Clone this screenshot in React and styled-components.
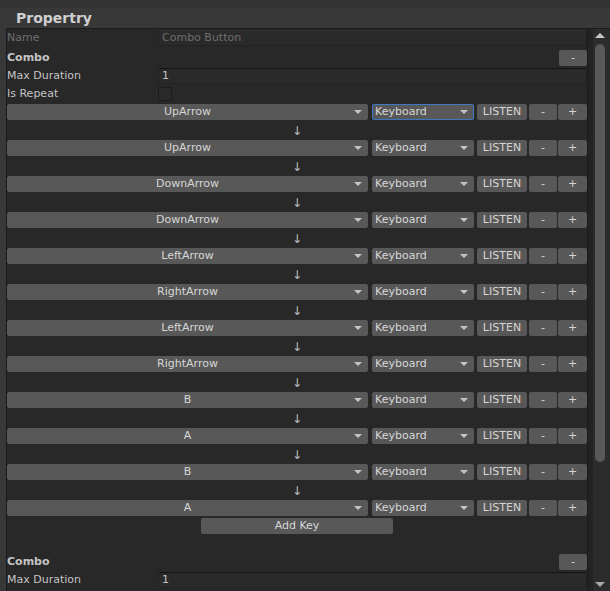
import React from 'react';
import styled, { createGlobalStyle } from 'styled-components';

const GlobalStyle = createGlobalStyle`
  html, body {
    margin: 0;
    padding: 0;
    background: #383838;
  }
  body {
    font-family: "DejaVu Sans", "Liberation Sans", sans-serif;
    font-size: 11px;
    color: #c4c4c4;
    overflow: hidden;
  }
`;

const Window = styled.div`
  width: 610px;
  height: 591px;
  overflow: hidden;
  background: #383838;
  border-top: 8px solid #333333;
  box-sizing: border-box;
`;

const Title = styled.div`
  height: 20px;
  padding-left: 16px;
  font-size: 14px;
  font-weight: bold;
  color: #cfcfcf;
  line-height: 20px;
`;

const Body = styled.div`
  display: flex;
  height: 563px;
  margin-left: 6px;
`;

const Panel = styled.div`
  width: 580px;
  padding-top: 1px;
  background: #282828;
  border: 1px solid #1b1b1b;
  border-bottom: none;
  overflow: hidden;
`;

const Scrollbar = styled.div`
  position: relative;
  width: 22px;
  background: #2c2c2c;
  border-top: 1px solid #1b1b1b;
  border-left: 5px solid #232323;
  box-sizing: border-box;
`;

const ScrollArrow = styled.div`
  position: absolute;
  left: 2px;
  width: 0;
  height: 0;
  border-left: 5px solid transparent;
  border-right: 5px solid transparent;
  ${p => p.$down
    ? 'bottom: 4px; border-top: 5px solid #a8a8a8;'
    : 'top: 4px; border-bottom: 5px solid #c8c8c8;'}
`;

const Thumb = styled.div`
  position: absolute;
  left: 2px;
  top: 15px;
  width: 10px;
  height: 418px;
  border-radius: 5px;
  background: #595959;
`;

const Row = styled.div`
  display: flex;
  align-items: center;
  height: 16px;
  line-height: 16px;
  margin-top: ${p => p.$mt ?? 2}px;
`;

const Label = styled.div`
  width: 151px;
  flex-shrink: 0;
  white-space: nowrap;
  color: ${p => (p.$disabled ? '#6e6e6e' : '#c4c4c4')};
  font-weight: ${p => (p.$bold ? 'bold' : 'normal')};
`;

const Field = styled.div`
  flex: 1;
  height: 16px;
  box-sizing: border-box;
  padding-left: 3px;
  line-height: 14px;
  background: #2a2a2a;
  border: 1px solid #232323;
  border-top-color: ${p => (p.$disabled ? '#2c2c2c' : '#141414')};
  border-radius: 3px;
  color: ${p => (p.$disabled ? '#6e6e6e' : '#c4c4c4')};
`;

const Checkbox = styled.div`
  width: 14px;
  height: 14px;
  box-sizing: border-box;
  background: #2a2a2a;
  border: 1px solid #1c1c1c;
  border-radius: 2px;
`;

const Spacer = styled.div`
  flex: 1;
`;

const Button = styled.div`
  width: ${p => p.$w}px;
  flex-shrink: 0;
  height: 16px;
  margin-left: ${p => p.$ml || 0}px;
  box-sizing: border-box;
  background: #585858;
  border-radius: 2px;
  color: #d6d6d6;
  text-align: center;
  line-height: 16px;
  white-space: nowrap;
`;

const Dropdown = styled.div`
  position: relative;
  ${p => (p.$w ? `width: ${p.$w}px; flex-shrink: 0;` : 'flex: 1;')}
  margin-left: ${p => p.$ml || 0}px;
  height: 16px;
  box-sizing: border-box;
  background: #585858;
  border: 1px solid ${p => (p.$focus ? '#3b79c5' : '#585858')};
  border-radius: 2px;
  color: #d6d6d6;
  line-height: 14px;
  text-align: ${p => (p.$center ? 'center' : 'left')};
  padding: 0 16px 0 ${p => (p.$center ? 16 : 2)}px;
  white-space: nowrap;
`;

const Caret = styled.span`
  position: absolute;
  right: 5px;
  top: 5px;
  width: 0;
  height: 0;
  border-left: 4px solid transparent;
  border-right: 4px solid transparent;
  border-top: 4px solid #c4c4c4;
`;

const ArrowRow = styled.div`
  height: 19px;
  padding-top: 1px;
  line-height: 20px;
  text-align: center;
  color: #bdbdbd;
  font-size: 12px;
  overflow: hidden;
`;

const AddRow = styled.div`
  display: flex;
  justify-content: center;
  height: 16px;
  margin-top: 2px;
`;

const Gap = styled.div`
  height: ${p => p.$h}px;
`;

const keys = [
  'UpArrow', 'UpArrow', 'DownArrow', 'DownArrow', 'LeftArrow', 'RightArrow',
  'LeftArrow', 'RightArrow', 'B', 'A', 'B', 'A',
];

const KeyRow = ({ name, focus }) => (
  <Row $mt={0}>
    <Dropdown $center>{name}<Caret /></Dropdown>
    <Dropdown $w={102} $ml={4} $focus={focus}>Keyboard<Caret /></Dropdown>
    <Button $w={50} $ml={3}>LISTEN</Button>
    <Button $w={28} $ml={2}>-</Button>
    <Button $w={29} $ml={1}>+</Button>
  </Row>
);

const App = () => (
  <Window>
    <GlobalStyle />
    <Title>Propertry</Title>
    <Body>
      <Panel>
        <Row $mt={0}>
          <Label $disabled>Name</Label>
          <Field $disabled>Combo Button</Field>
        </Row>
        <Row $mt={4}>
          <Label $bold>Combo</Label>
          <Spacer />
          <Button $w={28}>-</Button>
        </Row>
        <Row>
          <Label>Max Duration</Label>
          <Field>1</Field>
        </Row>
        <Row>
          <Label>Is Repeat</Label>
          <Checkbox />
        </Row>
        <Gap $h={2} />
        {keys.map((k, i) => (
          <React.Fragment key={i}>
            <KeyRow name={k} focus={i === 0} />
            {i < keys.length - 1 && <ArrowRow>↓</ArrowRow>}
          </React.Fragment>
        ))}
        <AddRow>
          <Button $w={192}>Add Key</Button>
        </AddRow>
        <Row $mt={20}>
          <Label $bold>Combo</Label>
          <Spacer />
          <Button $w={28}>-</Button>
        </Row>
        <Row>
          <Label>Max Duration</Label>
          <Field>1</Field>
        </Row>
      </Panel>
      <Scrollbar>
        <ScrollArrow />
        <Thumb />
        <ScrollArrow $down />
      </Scrollbar>
    </Body>
  </Window>
);

export default App;
